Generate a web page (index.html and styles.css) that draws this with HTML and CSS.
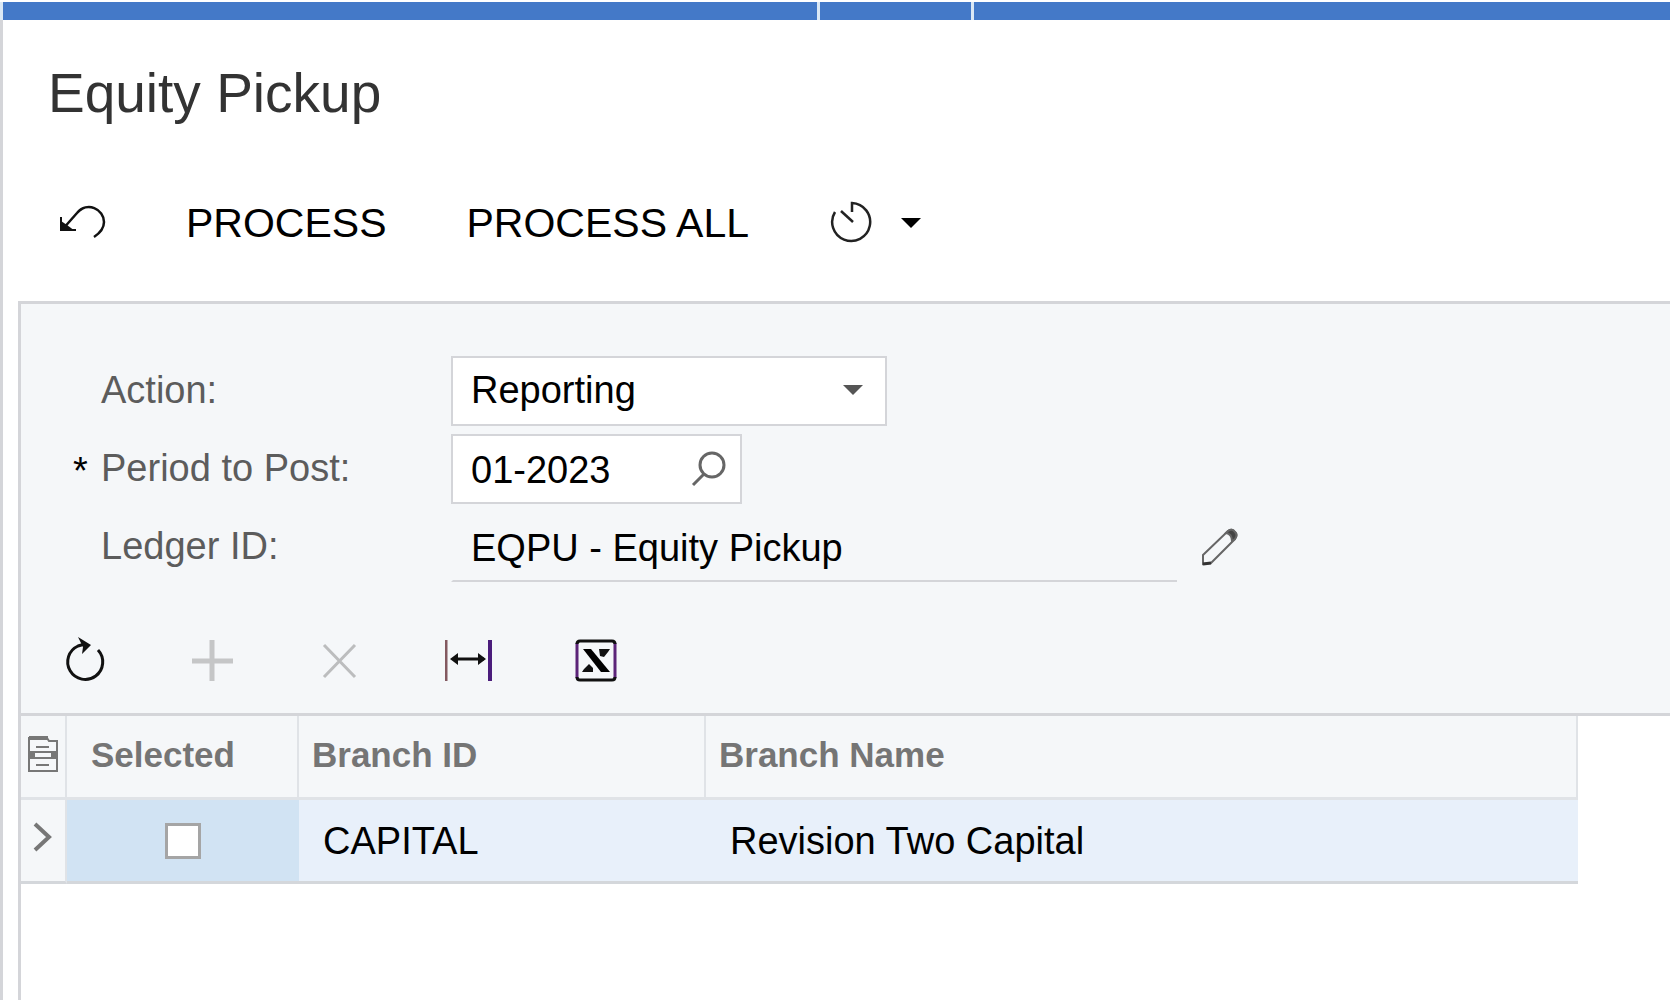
FILE: index.html
```
<!DOCTYPE html>
<html lang="en">
<head>
    <meta charset="UTF-8">
    <meta name="viewport" content="width=device-width, initial-scale=1.0">
    <title>Equity Pickup</title>
    <link rel="stylesheet" href="styles.css">
</head>
<body>
    <!-- Top strip -->
    <div class="top-bar">
        <span class="bar-main"></span>
        <span class="bar-middle"></span>
        <span class="bar-rest"></span>
    </div>

    <div class="page">
        <h1>Equity Pickup</h1>

        <!-- Screen toolbar -->
        <div class="toolbar">
            <button type="button" class="icon-button" aria-label="Cancel">
                <svg width="48" height="48" viewBox="0 0 48 48" fill="none" stroke="#111" stroke-width="2.5">
                    <path d="M4 31 L19 14 C29 2 46 10 46 23 C46 30 42 34 36 38"/>
                    <path d="M3 22 V32 H17 L9 26 Z" fill="#111" stroke="none"/>
                    <path d="M3 18 V31 H18" stroke-width="2"/>
                </svg>
            </button>
            <button type="button">PROCESS</button>
            <button type="button">PROCESS ALL</button>
            <button type="button" class="schedule-button" aria-label="Schedule">
                <svg width="44" height="44" viewBox="0 0 44 44" fill="none" stroke="#222" stroke-width="2.5">
                    <path d="M23 11 V2 A19 19 0 1 1 6 11"/>
                    <path d="M12 10 L24 21"/>
                </svg>
                <svg width="20" height="10" viewBox="0 0 20 10"><path d="M0 0 H20 L10 10 Z" fill="#000"/></svg>
            </button>
        </div>

        <div class="panel">
            <!-- Selection form -->
            <form class="filters">
                <div class="row">
                    <label for="action">Action:</label>
                    <div class="field select-field">
                        <select id="action">
                            <option>Reporting</option>
                        </select>
                        <svg class="caret" width="20" height="10" viewBox="0 0 20 10"><path d="M0 0 H20 L10 10 Z" fill="#555"/></svg>
                    </div>
                </div>
                <div class="row">
                    <span class="required">*</span>
                    <label for="period">Period to Post:</label>
                    <div class="field period-field">
                        <input type="text" id="period" value="01-2023">
                        <button type="button" class="lookup" aria-label="Find period">
                            <svg width="36" height="36" viewBox="0 0 36 36" fill="none" stroke="#666" stroke-width="3">
                                <circle cx="22" cy="14" r="12"/>
                                <path d="M14 23 L3 34"/>
                            </svg>
                        </button>
                    </div>
                </div>
                <div class="row">
                    <label for="ledger">Ledger ID:</label>
                    <div class="field ledger-field">
                        <input type="text" id="ledger" value="EQPU - Equity Pickup" readonly>
                    </div>
                    <button type="button" class="edit" aria-label="Edit ledger">
                        <svg width="40" height="40" viewBox="0 0 40 40" fill="none" stroke="#666" stroke-width="2">
                            <path d="M3 28 L28 4 Q32 1 35 5 Q38 8 35 12 L11 36 L3 37 Z"/>
                            <path d="M26 6 L28 4 Q32 1 35 5 Q38 8 35 12 L32 14 Q32 7 26 6 Z" fill="#444"/>
                            <path d="M3 37 L11 36" stroke-width="3" stroke="#333"/>
                        </svg>
                    </button>
                </div>
            </form>

            <!-- Grid toolbar -->
            <div class="grid-toolbar">
                <button type="button" class="icon-button" aria-label="Refresh">
                    <svg width="48" height="48" viewBox="0 0 48 48" fill="none" stroke="#111" stroke-width="3">
                        <path d="M37 13 A17.500 17.500 0 1 1 17 9 L24 7"/>
                        <path d="M17 0 L30 8 L21 17 L22 10 Z" fill="#111" stroke="none"/>
                    </svg>
                </button>
                <button type="button" class="icon-button" aria-label="Add row" disabled>
                    <svg width="48" height="48" viewBox="0 0 48 48" stroke="#c5c6c7" stroke-width="5">
                        <path d="M23 3 V44 M3 24 H44"/>
                    </svg>
                </button>
                <button type="button" class="icon-button" aria-label="Delete row" disabled>
                    <svg width="48" height="48" viewBox="0 0 48 48" stroke="#bcbdbe" stroke-width="3">
                        <path d="M7 8 L38 40 M38 8 L7 40"/>
                    </svg>
                </button>
                <button type="button" class="icon-button" aria-label="Fit to screen">
                    <svg width="48" height="48" viewBox="0 0 48 48" fill="#111">
                        <path d="M1 3 V44" stroke="#835960" stroke-width="3"/>
                        <path d="M45 3 V44" stroke="#4b1d7c" stroke-width="4"/>
                        <path d="M8 22 H39" stroke="#111" stroke-width="3"/>
                        <path d="M5 22 L13 16 V28 Z M41 22 L33 16 V28 Z"/>
                    </svg>
                </button>
                <button type="button" class="icon-button" aria-label="Export to Excel">
                    <svg width="48" height="48" viewBox="0 0 48 48" fill="none">
                        <path d="M4 6 V41 M42 6 V41" stroke="#5c2479" stroke-width="3"/>
                        <path d="M4 7 Q4 4 7 4 H39 Q42 4 42 7 M4 40 Q4 43 7 43 H39 Q42 43 42 40" stroke="#111" stroke-width="3"/>
                        <path d="M10 12 H18 L37 35 H28 Z" fill="#000"/>
                        <path d="M26 12 H37 L35 15 L31 20 L27 19 Z M16 27 L20 31 L20 35 H9 L11 32 Z" fill="#111"/>
                    </svg>
                </button>
            </div>

            <!-- Branch grid -->
            <div class="grid">
                <table>
                    <colgroup>
                        <col class="col-marker">
                        <col class="col-selected">
                        <col class="col-branch">
                        <col>
                    </colgroup>
                    <thead>
                        <tr>
                            <th class="marker">
                                <svg width="32" height="36" viewBox="0 0 32 36" fill="none" stroke="#777" stroke-width="2">
                                    <path d="M2 35 V2 H20 L22 5 H30 V35 Z"/>
                                    <path d="M2 2 H21" stroke-width="4"/>
                                    <path d="M2 16 H30 M2 22 H30"/>
                                    <path d="M2 19 H8 M24 19 H30" stroke-width="6"/>
                                    <path d="M9 11 H22 M9 29 H22"/>
                                </svg>
                            </th>
                            <th class="selected">Selected</th>
                            <th>Branch ID</th>
                            <th>Branch Name</th>
                        </tr>
                    </thead>
                    <tbody>
                        <tr>
                            <td class="marker">
                                <svg width="20" height="30" viewBox="0 0 20 30" fill="none" stroke="#777" stroke-width="4">
                                    <path d="M2 2 L16 15 L2 28"/>
                                </svg>
                            </td>
                            <td class="selected"><input type="checkbox" aria-label="Select CAPITAL"></td>
                            <td>CAPITAL</td>
                            <td>Revision Two Capital</td>
                        </tr>
                    </tbody>
                </table>
            </div>
        </div>
    </div>
</body>
</html>
```
FILE: styles.css
```
* {
    box-sizing: border-box;
}
body {
    margin: 0;
    padding-top: 2px;
    min-height: 100vh;
    display: flex;
    flex-direction: column;
    background-color: white;
    color: black;
    font-family: "Liberation Sans", Arial, sans-serif;
    font-size: 38px;
}
svg {
    display: block;
}
button {
    padding: 0;
    border: none;
    background: none;
    color: black;
    font-family: inherit;
    font-size: 41px;
    line-height: 48px;
    cursor: pointer;
}
.top-bar {
    display: flex;
    gap: 3px;
    height: 18px;
    padding-left: 3px;
    background-color: #dbe8f5;
}
.top-bar span {
    background-color: #4479c8;
}
.bar-main {
    width: 814px;
}
.bar-middle {
    width: 151px;
}
.bar-rest {
    flex: 1;
}
.page {
    flex: 1;
    display: flex;
    flex-direction: column;
    padding-left: 15px;
    border-left: 3px solid #d4d5d9;
}
h1 {
    margin: 0;
    padding: 41px 0 74px 30px;
    font-size: 55px;
    font-weight: normal;
    line-height: 64px;
    color: #333;
}
.toolbar {
    display: flex;
    align-items: center;
    gap: 80px;
    padding: 0 0 54px 40px;
}
.icon-button {
    width: 48px;
    height: 48px;
}
.schedule-button {
    display: flex;
    align-items: center;
    gap: 28px;
}
.panel {
    flex: 1;
    border-top: 3px solid #d4d5d9;
    border-left: 3px solid #d4d5d9;
}

/* Selection form */
.filters {
    display: flex;
    flex-direction: column;
    gap: 8px;
    padding: 52px 0 0 52px;
    background-color: #f5f7f9;
}
.row {
    display: grid;
    grid-template-columns: 28px 350px auto 1fr;
    align-items: center;
}
.row label {
    grid-column: 2;
    padding-bottom: 2px;
    color: #5c5c5c;
}
.required {
    padding-top: 4px;
}
.field {
    display: flex;
    align-items: center;
    height: 70px;
    border: 2px solid #d4d5d9;
    background-color: white;
}
.field select,
.field input {
    flex: 1;
    min-width: 0;
    height: 100%;
    padding: 2px 0 0 18px;
    border: none;
    outline: none;
    background: transparent;
    color: black;
    font-family: inherit;
    font-size: 38px;
    appearance: none;
}
.field select {
    padding: 0 0 2px 18px;
}
.select-field {
    position: relative;
    width: 436px;
}
.caret {
    position: absolute;
    right: 22px;
    top: 27px;
    pointer-events: none;
}
.period-field {
    width: 291px;
    padding-right: 14px;
}
.ledger-field {
    width: 726px;
    padding-top: 2px;
    border-width: 0 0 2px 2px;
    border-left-color: transparent;
    background: transparent;
}
.edit {
    justify-self: start;
    padding-left: 23px;
}

/* Grid */
.grid-toolbar {
    display: flex;
    gap: 80px;
    padding: 55px 0 28px 40px;
    background-color: #f5f7f9;
    border-bottom: 3px solid #d4d5d9;
}
.grid {
    padding-right: 92px;
}
table {
    width: 100%;
    table-layout: fixed;
    border-collapse: separate;
    border-spacing: 0;
}
.col-marker {
    width: 46px;
}
.col-selected {
    width: 232px;
}
.col-branch {
    width: 407px;
}
th {
    height: 84px;
    padding: 0 0 4px 13px;
    border-right: 2px solid #e0e3e7;
    border-bottom: 3px solid #e0e3e7;
    background-color: #f5f7f9;
    color: #757575;
    font-size: 35px;
    text-align: left;
}
td {
    height: 84px;
    padding: 2px 0 0 24px;
    border-bottom: 3px solid #d4d7db;
    background-color: #e8f0fa;
}
th.selected {
    padding-left: 24px;
}
td.selected {
    padding: 0;
    background-color: #d1e3f3;
    text-align: center;
}
th.marker {
    padding: 0 0 6px 6px;
}
td.marker {
    padding: 0 0 8px 12px;
    border-right: 2px solid #e0e3e7;
    background-color: #f5f7f9;
}
input[type="checkbox"] {
    display: block;
    width: 36px;
    height: 36px;
    margin: 0 auto;
    appearance: none;
    border: 3px solid #a5a5a5;
    background-color: white;
}
```
